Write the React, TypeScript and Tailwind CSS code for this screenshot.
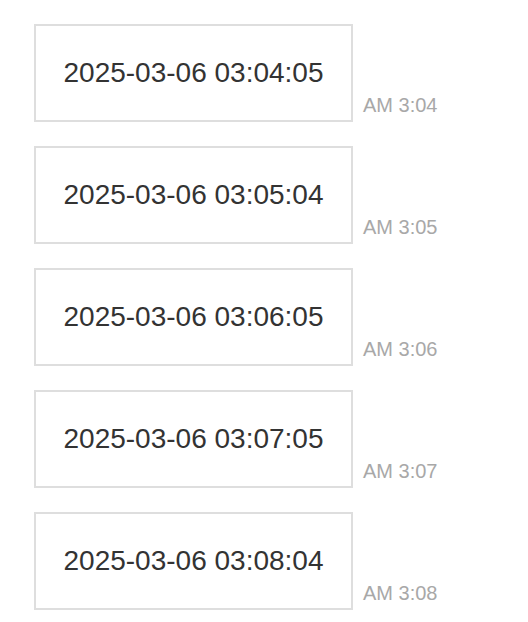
const messages = [
  { stamp: '2025-03-06 03:04:05', time: 'AM 3:04' },
  { stamp: '2025-03-06 03:05:04', time: 'AM 3:05' },
  { stamp: '2025-03-06 03:06:05', time: 'AM 3:06' },
  { stamp: '2025-03-06 03:07:05', time: 'AM 3:07' },
  { stamp: '2025-03-06 03:08:04', time: 'AM 3:08' },
];

export default function App() {
  return (
    <div
      className="w-[528px] h-[622px] bg-white pl-[34px] pt-[24px] flex flex-col gap-[24px]"
      style={{ fontFamily: '"Liberation Sans", Arial, sans-serif' }}
    >
      {messages.map((m) => (
        <div key={m.stamp} className="flex items-end gap-[10px]">
          <div className="w-[319px] h-[98px] border-2 border-[#dedede] flex items-center justify-center text-[28px] text-[#333333]">
            {m.stamp}
          </div>
          <span className="text-[20px] leading-none text-[#a8a8a8] mb-[7px]">{m.time}</span>
        </div>
      ))}
    </div>
  );
}
